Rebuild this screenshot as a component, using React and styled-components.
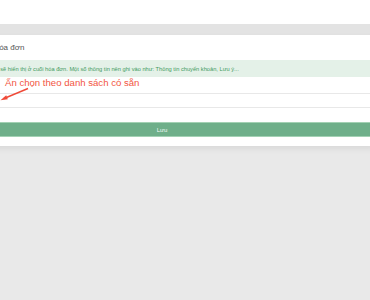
import styled, { createGlobalStyle } from 'styled-components'

const GlobalStyle = createGlobalStyle`
  html, body {
    margin: 0;
    padding: 0;
    background: #e9e9e9;
    overflow: hidden;
  }
  body {
    font-family: 'Liberation Sans', Arial, sans-serif;
  }
`

export default function App() {
  return (
    <Page>
      <GlobalStyle />
      <TopBar />
      <Band />
      <Panel>
        <Title>Ghi chú cuối hóa đơn</Title>
        <Note>
          Nội dung ghi chú sẽ hiển thị ở cuối hóa đơn. Một số thông tin nên ghi
          vào như: Thông tin chuyển khoản, Lưu ý...
        </Note>
        <Input type="text" />
        <SaveButton>Lưu</SaveButton>
      </Panel>
      <Hint>Ấn chọn theo danh sách có sẵn</Hint>
      <Arrow width="32" height="16" viewBox="0 0 32 16">
        <line x1="28" y1="1.5" x2="4" y2="11.5" stroke="#ef4a38" strokeWidth="1.4" />
        <path d="M0.5 13.2 L6.2 8.2 L7.8 12.2 Z" fill="#ef4a38" />
      </Arrow>
    </Page>
  )
}

const Page = styled.div`
  position: relative;
  width: 370px;
  height: 300px;
  overflow: hidden;
  background: #e9e9e9;
`

const TopBar = styled.div`
  height: 24px;
  background: #fff;
`

const Band = styled.div`
  height: 11px;
  background: #e3e3e3;
`

const Panel = styled.div`
  width: 424px;
  margin-left: -50px;
  padding: 9px 0;
  background: #fff;
  box-shadow: 0 3px 6px rgba(0, 0, 0, 0.07);
  display: flex;
  flex-direction: column;
`

const Title = styled.div`
  margin-left: -2px;
  font-size: 8px;
  line-height: 8px;
  color: #555;
  white-space: nowrap;
`

const Note = styled.div`
  margin-top: 8px;
  height: 17px;
  padding: 0 6px;
  display: flex;
  align-items: center;
  background: #e4f1e8;
  color: #3f9a5e;
  font-size: 5.7px;
  white-space: nowrap;
  overflow: hidden;
`

const Input = styled.input`
  margin-top: 16px;
  height: 15px;
  box-sizing: border-box;
  border: 1px solid #e8e8e8;
  background: #fff;
  outline: none;
  padding: 0;
`

const SaveButton = styled.button`
  margin-top: 14px;
  height: 15px;
  box-sizing: border-box;
  border: 1px solid #a3d1b4;
  background: #6faf8a;
  color: #f4faf6;
  font-family: 'Liberation Sans', Arial, sans-serif;
  font-size: 6px;
  padding: 0;
`

const Hint = styled.div`
  position: absolute;
  top: 76.5px;
  left: 5px;
  font-size: 9.6px;
  line-height: 12px;
  color: #f2553f;
  white-space: nowrap;
`

const Arrow = styled.svg`
  position: absolute;
  top: 87px;
  left: 0;
`
